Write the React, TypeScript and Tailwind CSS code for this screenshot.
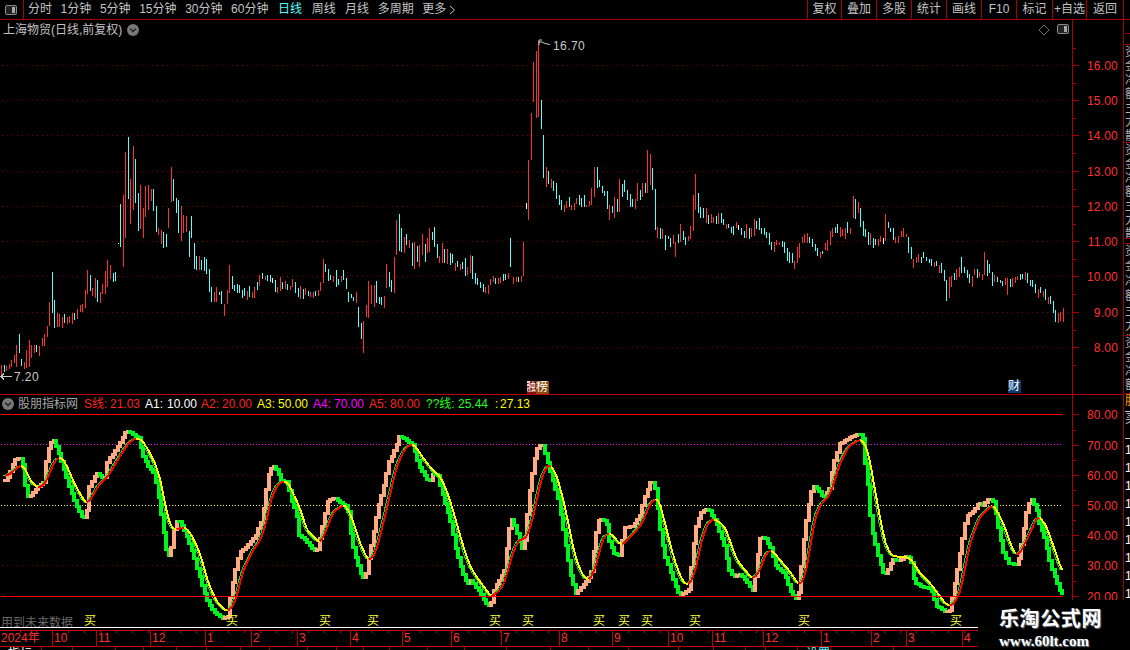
import React from "react";

const Z6 = "4 705 735 r,12 705 725 c,19 708 722 r,27 703 718 r,34 690 710 r,43 675 700 r,50 645 712 r,58 612 670 c,65 687 707 c,73 697 717 r,80 660 715 r,88 630 712 r,95 645 685 r,103 645 668 r,110 645 665 c,118 648 678 r,128 625 648 r,134 612 648 r,142 588 620 r,149 516 588 r,157 427 548 c,164 510 593 c,172 548 590 r,179 552 590 r,187 560 594 r,194 552 580 c,202 560 582 r,209 558 578 r,217 550 582 r,224 548 570 c,232 538 568 r,241 525 545 r,248 522 546 r,256 480 533 r,263 420 492 r,271 435 484 c,278 473 498 r,286 445 505 r,293 450 516 c,301 487 518 r,308 462 492 r,316 422 492 r,323 390 472 r,331 405 448 r,339 428 456 c,346 425 453 c,355 338 342 w,362 222 352 c,370 195 411 r,377 65 323 r,385 20 207 c,392 148 282 r,400 48 240 r,406 87 218 c,415 190 303 c,421 165 296 r,430 233 323 r,436 168 260 r,445 165 240 r,454 176 213 r,461 176 243 c,469 228 305 c,476 294 314 r,484 300 342 r,491 305 353 c,499 312 350 c,506 233 294 r,514 111 215 r,521 148 213 c,529 205 250 c,536 210 308 c,545 228 333 r,551 255 308 r,559 258 307 r,568 303 380 c,575 258 323 c,584 340 416 c,590 378 420 c,599 378 420 r,605 390 420 c,613 382 423 c,619 387 433 c,628 417 485 c,635 472 515 c,643 486 515 r,650 472 515 r,658 486 495 c,665 483 522 c,673 522 557 r,682 480 522 r,688 405 488 r,698 438 478 c,704 465 482 c,712 462 488 c,718 465 490 c,727 480 503 c,733 475 498 c,742 483 510 r,748 468 500 c,757 486 503 r,763 472 503 r,772 455 480 c,779 435 468 r,787 430 446 c,796 438 450 r,803 435 452 c,811 435 455 c,817 445 458 w,826 450 486 c,833 472 488 r,841 440 484 r,848 455 478 c,856 454 478 r,863 462 480 c,871 468 480 r,878 447 470 r,885 455 490 c,895 475 500 c";
const Z7 = "0 768 808 r,10 778 808 c,17 773 795 r,25 783 797 c,32 785 802 r,40 785 803 r,47 783 797 c,55 780 797 r,62 755 783 r,70 687 760 r,77 702 727 c,85 717 752 c,92 735 750 c,100 738 755 r,110 720 772 c,115 747 765 c,125 738 755 r,130 720 750 c,140 745 777 c,145 787 815 c,155 793 805 c,160 800 813 c,170 787 818 r,175 832 890 c,185 878 928 c,190 873 968 r,200 825 860 r,205 753 865 r,213 765 822 r,222 765 832 r,229 753 818 c,239 800 823 c,245 800 825 c,253 798 833 r,260 702 773 r,268 727 770 c,275 750 785 c,283 680 790 r,290 570 675 r,298 552 662 c,305 595 665 c,313 620 670 r,320 612 645 c,328 630 655 r,338 638 707 c,344 635 716 r,352 648 697 c,358 645 710 r,366 612 675 r,375 643 695 c,381 624 668 r,389 595 665 r,397 605 630 c,403 590 652 c,412 642 685 c,418 677 698 r,427 640 700 r,434 657 700 c,442 657 703 r,450 670 705 c,457 672 698 c,466 698 722 r,473 692 712 c,481 703 720 r,487 697 718 c,495 684 738 c,502 710 735 r,511 675 728 r,517 678 748 c,525 728 762 c,532 743 765 c,541 757 773 c,549 762 785 c,556 770 790 r,565 765 792 r,572 748 765 r,579 738 757 r,586 745 762 c,595 745 762 r,601 742 760 r,610 733 752 c,616 733 750 c,625 730 747 r,631 625 710 c,640 742 762 r,648 740 757 r,655 742 757 c,663 738 755 r,670 636 737 r,679 519 537 w,685 390 570 r,694 250 390 r,700 97 215 r,709 63 263 r,715 33 260 r,724 210 297 c,730 315 443 c,739 412 470 r,745 424 462 c,754 447 475 r,760 453 483 c,769 460 507 c,778 494 525 c,784 510 540 c,793 525 545 r,799 513 533 r,808 500 530 c,814 525 540 r,823 520 540 r,829 503 522 r,838 495 525 c,844 503 530 c,853 495 532 c,859 525 532 r,868 513 527 r,874 473 525 r,883 410 500 r,892 410 475 c,898 450 470 c,907 468 490 c,913 483 497 c,922 483 538 c,928 525 570 r,937 528 550 c,943 500 565 r,952 507 545 c,958 447 545 r,967 462 502 c,973 450 485 c,982 480 510 c,991 492 532 c,997 507 530 c,1006 507 537 r,1012 458 513 r,1021 480 510 c,1027 458 500 r,1036 458 490 c,1041 360 490 r,1051 372 465 r,1057 413 480 c,1066 477 600 c,1072 592 625 r,1081 595 628 c,1087 598 628 r,1096 615 660 c,1105 618 627 c,1111 625 650 c,1120 615 642 r,1126 637 680 r,1135 612 640 c,1141 582 635 r,1150 603 630 c,1156 622 645 c,1165 618 633 r,1171 588 627 r,1180 495 603 r,1187 432 540 r,1195 490 548 c";
const Z8 = "25 188 250 c,32 230 265 c,40 233 265 c,48 233 278 r,56 255 282 c,64 252 280 r,71 262 280 r,79 258 282 c,86 250 282 r,94 250 278 c,100 267 285 c,109 282 297 r,115 282 295 c,124 290 310 c,130 288 315 c,139 276 295 r,145 285 300 w,154 295 315 c,163 303 325 c,169 282 325 r,178 295 328 c,184 295 320 r,193 267 318 r,199 272 297 c,208 264 300 c,214 293 312 c,223 295 315 c,229 305 325 c,238 310 345 c,244 335 360 c,253 335 365 r,259 330 345 r,268 335 345 r,277 332 352 c,283 335 370 c,292 355 393 c,298 365 400 c,307 368 400 c,313 393 417 r,322 352 398 r,328 340 383 r,337 320 340 r,343 312 340 r,352 310 338 r,358 320 340 c,367 327 350 c,376 342 362 c,383 355 378 c,391 365 383 r,397 362 372 c,406 340 360 r,412 330 362 r,421 303 345 r,427 295 320 r,436 290 310 c,442 283 310 c,451 292 322 r,457 296 318 r,466 293 328 r,472 277 310 c,481 294 312 r,490 198 265 r,496 207 268 c,505 217 248 r,511 235 290 c,520 272 318 c,526 298 320 c,535 307 345 c,541 308 345 r,550 325 353 c,556 326 345 c,565 328 348 r,571 318 335 r,579 325 342 w,586 252 332 r,595 277 293 c,601 293 305 c,610 295 330 c,616 320 340 r,625 318 340 r,634 304 322 r,640 295 320 r,649 313 320 r,655 320 368 c,664 352 388 c,670 388 413 r,679 380 398 r,685 372 395 r,694 380 400 c,700 367 385 c,709 382 392 c,718 388 398 c,724 388 407 c,733 397 412 r,739 392 408 c,748 405 430 r,754 400 430 c,763 420 452 c,769 450 512 c,778 440 503 r,784 438 470 r,793 430 450 c,799 418 450 r,808 412 440 r,814 380 428 c,823 410 430 c,832 420 445 c,838 432 460 c,847 437 470 r,853 418 435 r,862 418 445 c,868 425 440 r,877 432 450 r,883 366 436 r,892 390 438 c,898 402 430 c,907 427 467 c,913 435 455 r,922 440 455 c,931 450 460 c,937 452 467 c,946 445 465 r,952 445 495 r,961 447 472 c,967 445 470 r,976 440 458 r,982 438 450 r,991 432 450 c,997 432 448 c,1006 427 450 r,1012 428 458 c,1021 450 467 c,1027 450 472 c,1036 462 488 c,1045 477 503 r,1051 470 490 c,1060 483 502 r,1066 477 510 c,1075 500 522 r,1081 498 522 c,1090 513 548 c,1096 540 575 c,1105 550 578 r,1111 547 572 r,1120 535 575 r";

function candlePaths() {
  const d: Record<string, string> = { r: "", c: "", w: "" };
  const add = (s: string, ox: number, oy: number) => {
    s.split(",").forEach((t) => {
      const [x, a, b, c] = t.split(" ");
      const px = Math.floor(ox + Number(x) / 3) + 0.5;
      const y1 = Math.round(oy + Number(a) / 3);
      const y2 = Math.round(oy + Number(b) / 3);
      d[c] += `M${px} ${y1}V${y2}`;
    });
  };
  add(Z6, 0, 130);
  add(Z7, 300, 30);
  add(Z8, 690, 130);
  return d;
}

type P = number[];
const F9: P[] = [[12,210],[25,195],[30,170],[42,148],[58,143],[65,160],[72,190],[75,260],[90,255],[105,235],[128,215],[132,170],[145,100],[158,90],[165,105],[175,135],[190,180],[205,230],[225,285],[247,325],[257,310],[262,235],[275,208],[287,188],[300,200],[312,200],[320,150],[335,130],[355,100],[375,62],[395,70],[415,85],[422,130],[440,165],[460,190],[470,240],[480,310],[490,380],[500,445],[508,420],[515,400],[520,345],[530,325],[545,350],[560,385],[575,425],[590,480],[605,530],[620,575],[640,605],[665,625],[680,618],[690,545],[700,490],[715,425],[740,405],[765,375],[780,335],[790,280],[800,200],[815,165],[830,180],[840,210],[860,215],[870,270],[885,300],[895,375]];
const F10: P[] = [[10,385],[40,420],[50,415],[60,370],[70,320],[80,270],[100,262],[125,280],[140,290],[145,350],[160,430],[185,505],[195,490],[205,430],[215,380],[230,295],[245,240],[265,150],[285,110],[295,78],[320,90],[335,105],[355,170],[385,215],[395,190],[410,195],[430,270],[450,340],[465,420],[485,490],[500,520],[510,510],[540,550],[560,588],[570,580],[580,535],[610,480],[620,390],[630,320],[640,345],[665,420],[670,400],[685,250],[700,150],[712,105],[725,105],[740,155],[770,260],[785,350],[810,500],[825,550],[850,520],[870,490]];
const F11: P[] = [[0,435],[15,370],[25,325],[45,330],[55,395],[70,430],[85,435],[100,352],[125,348],[145,320],[160,265],[175,222],[182,208],[195,240],[205,340],[220,430],[240,490],[265,555],[280,548],[295,535],[303,435],[315,350],[330,305],[350,295],[375,335],[400,405],[415,480],[430,500],[445,490],[465,510],[485,540],[495,480],[505,385],[520,380],[540,415],[555,470],[580,490],[600,545],[615,565],[625,540],[635,410],[650,300],[665,225],[680,235],[697,262],[715,235],[725,170],[745,100],[770,85],[805,68],[815,85],[822,155],[830,220],[840,340]];
const F12: P[] = [[70,390],[85,450],[100,497],[115,470],[125,445],[140,452],[170,435],[180,450],[190,515],[215,530],[240,535],[255,585],[280,603],[298,600],[305,555],[320,470],[330,410],[345,320],[370,300],[385,275],[395,285],[415,262],[428,275],[440,340],[455,420],[470,458],[495,463],[505,440],[520,345],[530,285],[543,266],[557,300],[565,340],[580,380],[600,470],[630,550],[640,548]];
const S9: P[] = [[15,198],[30,192],[50,175],[65,162],[80,185],[95,220],[115,231],[130,228],[145,200],[160,160],[180,137],[200,165],[220,215],[240,250],[258,283],[275,265],[295,225],[320,205],[350,155],[385,100],[410,82],[430,95],[450,130],[470,170],[485,225],[500,310],[515,355],[525,360],[555,350],[575,375],[600,430],[625,520],[650,575],[680,605],[695,597],[710,560],[730,480],[760,420],[785,385],[800,330],[815,260],[835,220],[860,213],[880,250],[900,295]];
const S10: P[] = [[20,360],[60,400],[75,370],[100,305],[135,283],[155,320],[180,400],[205,453],[225,435],[250,340],[290,170],[315,115],[340,100],[370,145],[400,183],[425,205],[450,270],[490,410],[510,470],[540,515],[575,562],[610,530],[635,440],[655,390],[680,385],[700,320],[725,200],[748,158],[770,195],[795,290],[825,440],[850,500],[870,513]];
const S11: P[] = [[20,460],[40,380],[60,368],[95,407],[130,370],[155,345],[180,280],[205,263],[225,340],[250,440],[275,510],[295,528],[315,490],[335,390],[355,335],[375,327],[405,350],[440,450],[490,510],[510,480],[530,425],[545,420],[600,485],[630,530],[650,480],[675,320],[695,280],[720,255],[750,160],[775,110],[815,85],[835,125]];
const S12: P[] = [[80,270],[105,400],[125,438],[180,443],[210,490],[245,525],[285,580],[305,590],[330,550],[360,400],[390,320],[430,283],[460,340],[490,425],[505,438],[530,390],[565,315],[590,350],[640,495]];

function merge(parts: [P[], number][]) {
  const out: number[][] = [];
  parts.forEach(([pts, ox]) =>
    pts.forEach(([x, y]) => {
      const rx = ox + x / 3;
      if (!out.length || rx > out[out.length - 1][0]) out.push([rx, 410 + y / 3]);
    })
  );
  return out;
}
function sample(pts: number[][], step: number) {
  const res: number[][] = [];
  let j = 0;
  for (let x = pts[0][0]; x <= pts[pts.length - 1][0]; x += step) {
    while (j < pts.length - 2 && pts[j + 1][0] < x) j++;
    const [x0, y0] = pts[j];
    const [x1, y1] = pts[j + 1];
    res.push([x, y0 + ((y1 - y0) * (x - x0)) / (x1 - x0)]);
  }
  return res;
}
function smooth(pts: number[][]) {
  return pts.map((p, i) => {
    const a = pts[Math.max(0, i - 1)];
    const b = pts[Math.min(pts.length - 1, i + 1)];
    return [p[0], (a[1] + 2 * p[1] + b[1]) / 4];
  });
}

const fast = sample(merge([[F9, 0], [F10, 300], [F11, 590], [F12, 850]]), 2.56);
const slow = smooth(sample(merge([[S9, 0], [S10, 300], [S11, 590], [S12, 850]]), 2.56));

function IndicatorLines() {
  const blocks = fast.map((p, i) => {
    const prev = fast[Math.max(0, i - 1)];
    const top = Math.round(Math.min(p[1], prev[1]));
    const bottom = Math.round(Math.max(p[1], prev[1]));
    const up = p[1] <= prev[1];
    return (
      <rect
        key={i}
        x={Math.round(p[0]) - 1}
        y={top - 1}
        width={4}
        height={Math.max(3, bottom - top + 3)}
        fill={up ? "#ffaa80" : "#00f420"}
      />
    );
  });
  let red = "";
  let yellow = "";
  let thin = "";
  slow.forEach((p, i) => {
    if (!i) return;
    const q = slow[i - 1];
    const seg = `M${q[0].toFixed(1)} ${q[1].toFixed(1)}L${p[0].toFixed(1)} ${p[1].toFixed(1)}`;
    if (p[1] <= q[1]) red += seg;
    else yellow += seg;
    thin += `M${(q[0] - 2).toFixed(1)} ${q[1].toFixed(1)}L${(p[0] - 2).toFixed(1)} ${p[1].toFixed(1)}`;
  });
  return (
    <g shapeRendering="crispEdges">
      {blocks}
      <path d={thin} stroke="#00e020" strokeWidth={1} fill="none" />
      <path d={yellow} stroke="#ffff00" strokeWidth={2} fill="none" />
      <path d={red} stroke="#ff0000" strokeWidth={2} fill="none" />
    </g>
  );
}

const AXIS = "#a80000";
const LABEL = "#ff3030";

function PanelIcon({ cls }: { cls: string }) {
  return (
    <svg viewBox="0 0 12 10" className={cls}>
      <rect x="0.5" y="0.5" width="11" height="9" rx="1.5" fill="#222" stroke="#8a8a8a" />
      <rect x="7" y="2" width="3" height="6" fill="#a8a8a8" />
    </svg>
  );
}
function CircleChevron() {
  return (
    <svg viewBox="0 0 12 12" className="w-[12px] h-[12px] shrink-0">
      <circle cx="6" cy="6" r="6" fill="#777" />
      <path d="M3.2 4.8L6 7.6L8.8 4.8" stroke="#222" strokeWidth="1.4" fill="none" />
    </svg>
  );
}

function Toolbar() {
  const left = ["分时", "1分钟", "5分钟", "15分钟", "30分钟", "60分钟"];
  const right = ["复权", "叠加", "多股", "统计", "画线", "F10", "标记", "+自选", "返回"];
  const widths = ["w-[34px]", "w-[35px]", "w-[35px]", "w-[35px]", "w-[35px]", "w-[35px]", "w-[36px]", "w-[34px]", "w-[37px]"];
  return (
    <div className="h-[20px] shrink-0 flex items-stretch border-b border-[#a80000] text-[12px] leading-[19px] text-[#c4c4c4]">
      <div className="w-[24px] shrink-0 border-r border-[#a80000] flex items-center justify-center pr-[1px]">
        <PanelIcon cls="w-[12px] h-[10px]" />
      </div>
      <div className="flex items-center gap-[8.6px] pl-[4px]">
        {left.map((t) => (
          <span key={t}>{t}</span>
        ))}
        <span className="text-[#55ffff] ml-[1px]">日线</span>
        <span className="ml-[1px]">周线</span>
        <span className="ml-[0.8px]">月线</span>
        <span>多周期</span>
        <span className="flex items-center gap-[3px]">
          更多
          <svg viewBox="0 0 7 10" className="w-[7px] h-[10px]">
            <path d="M1 1L5.5 5L1 9" stroke="#c4c4c4" fill="none" />
          </svg>
        </span>
      </div>
      <div className="ml-auto flex mr-[6px]">
        {right.map((t, i) => (
          <div key={t} className={`${widths[i]} border-l border-[#a80000] flex items-center justify-center`}>
            {t}
          </div>
        ))}
        <div className="w-0 border-r border-[#a80000]" />
      </div>
    </div>
  );
}

function Grid({ ys, x2 }: { ys: number[]; x2: number }) {
  return (
    <>
      {ys.map((y) => (
        <line key={y} x1={2} x2={x2} y1={y + 0.5} y2={y + 0.5} stroke="#7c0000" strokeDasharray="1 4" shapeRendering="crispEdges" />
      ))}
    </>
  );
}

function MainPane() {
  const c = candlePaths();
  const prices: [string, number][] = [["16.00",65],["15.00",100],["14.00",135],["13.00",171],["12.00",206],["11.00",241],["10.00",276],["9.00",312],["8.00",347]];
  return (
    <div className="relative h-[375px] shrink-0 border-b border-[#c00000]">
      <svg viewBox="0 20 1123 374" className="block w-[1123px] h-[374px]">
        <Grid ys={prices.map((p) => p[1])} x2={1068} />
        <path d={c.r} stroke="#ff3030" fill="none" shapeRendering="crispEdges" />
        <path d={c.c} stroke="#54ffff" fill="none" shapeRendering="crispEdges" />
        <path d={c.w} stroke="#ffffff" fill="none" shapeRendering="crispEdges" />
        <line x1={1072.5} x2={1072.5} y1={20} y2={394} stroke={AXIS} shapeRendering="crispEdges" />
        {prices.map(([t, y]) => (
          <g key={t}>
            <line x1={1073} x2={1079} y1={y + 0.5} y2={y + 0.5} stroke={AXIS} shapeRendering="crispEdges" />
            <line x1={1073} x2={1076} y1={y + 18} y2={y + 18} stroke={AXIS} shapeRendering="crispEdges" />
            <text x={1118} y={y + 5} fill={LABEL} fontSize={12} textAnchor="end" letterSpacing={0.2}>{t}</text>
          </g>
        ))}
        <line x1={1073} x2={1076} y1={48} y2={48} stroke={AXIS} shapeRendering="crispEdges" />
        <path d="M1 376.5H12M4 373.5L1 376.5L4 379.5" stroke="#c8c8c8" fill="none" shapeRendering="crispEdges" />
        <text x={14} y={381} fill="#c8c8c8" fontSize={12} letterSpacing={0.4}>7.20</text>
        <path d="M539 45V40H542M539 42H542L545 43.5L550 44.5" stroke="#c8c8c8" fill="none" />
        <text x={553} y={50} fill="#c8c8c8" fontSize={12} letterSpacing={0.4}>16.70</text>
        <path d="M1039 30L1044 25L1049 30L1044 35Z" stroke="#6a6a6a" fill="none" />
      </svg>
      <div className="absolute left-[3px] top-[3px] flex items-center gap-[5px] text-[12px] leading-[14px] text-[#c0c0c0]">
        <span>上海物贸(日线,前复权)</span>
        <CircleChevron />
      </div>
      <div className="absolute left-[1057px] top-[4px]">
        <PanelIcon cls="block w-[12px] h-[10px]" />
      </div>
      <div className="absolute left-[527px] top-[361px] flex h-[13px] text-[12px] leading-[13px] text-white">
        <span className="w-[9px] overflow-hidden bg-[#801010] flex justify-end">融</span>
        <span className="w-[13px] overflow-hidden bg-[#8a4a10]">榜</span>
      </div>
      <div className="absolute left-[1008px] top-[360px] w-[13px] h-[13px] bg-[#0c3a70] text-white text-[12px] leading-[13px]">财</div>
    </div>
  );
}

function IndicatorPane() {
  const levels: [string, number][] = [["80.00",414],["70.00",445],["60.00",475],["50.00",505],["40.00",535],["30.00",565],["20.00",596]];
  const buy = [90, 232, 325, 373, 495, 528, 599, 624, 647, 695, 804, 956];
  const heads: [string, string, number][] = [
    ["S线:", "#ff2020", 84], ["21.03", "#ff2020", 110],
    ["A1:", "#ffffff", 145], ["10.00", "#ffffff", 167],
    ["A2:", "#ff2020", 201], ["20.00", "#ff2020", 222],
    ["A3:", "#ffff00", 257], ["50.00", "#ffff00", 278],
    ["A4:", "#ff00ff", 313], ["70.00", "#ff00ff", 334],
    ["A5:", "#ff2020", 369], ["80.00", "#ff2020", 390],
    ["??线:", "#20ff20", 426], ["25.44", "#20ff20", 458],
    [":", "#ffff00", 495], ["27.13", "#ffff00", 500],
  ];
  return (
    <div className="relative h-[235px] shrink-0">
      <svg viewBox="0 395 1123 235" className="block w-[1123px] h-[235px]">
        <Grid ys={[475, 535, 565]} x2={1068} />
        <line x1={1} x2={1063} y1={414.5} y2={414.5} stroke="#ff0000" shapeRendering="crispEdges" />
        <line x1={1} x2={1063} y1={444.5} y2={444.5} stroke="#ff00ff" strokeDasharray="1 2" shapeRendering="crispEdges" />
        <line x1={1} x2={1063} y1={505.5} y2={505.5} stroke="#ffff40" strokeDasharray="1 2" shapeRendering="crispEdges" />
        <IndicatorLines />
        <line x1={1} x2={1063} y1={596.5} y2={596.5} stroke="#ff0000" shapeRendering="crispEdges" />
        <line x1={1072.5} x2={1072.5} y1={395} y2={600} stroke={AXIS} shapeRendering="crispEdges" />
        {levels.map(([t, y]) => (
          <g key={t}>
            <line x1={1073} x2={1079} y1={y + 0.5} y2={y + 0.5} stroke={AXIS} shapeRendering="crispEdges" />
            {y > 414 && <line x1={1073} x2={1076} y1={y - 15} y2={y - 15} stroke={AXIS} shapeRendering="crispEdges" />}
            <text x={1118} y={y + 5} fill={LABEL} fontSize={12} textAnchor="end" letterSpacing={0.2}>{t}</text>
          </g>
        ))}
        {buy.map((x, i) => (
          <text key={i} x={x} y={625} fill="#ffff40" fontSize={12} textAnchor="middle">买</text>
        ))}
        <text x={1} y={627} fill="#6a6a6a" fontSize={12}>用到未来数据</text>
        <line x1={0} x2={978} y1={627} y2={627} stroke="#ffffff" shapeRendering="crispEdges" />
        {heads.map(([t, col, x], i) => (
          <text key={i} x={x} y={408} fill={col} fontSize={12}>{t}</text>
        ))}
      </svg>
      <div className="absolute left-[2px] top-[2px] flex items-center gap-[4px] text-[12px] leading-[14px] text-[#a8a8a8]">
        <CircleChevron />
        <span>股朋指标网</span>
      </div>
    </div>
  );
}

function XAxis() {
  const segs: [string, number][] = [["2024年",52],["10",44],["11",54],["12",55],["1",46],["2",46],["3",53],["4",52],["5",49],["6",50],["7",58],["8",53],["9",56],["10",44],["11",51],["12",58],["1",50],["2",35],["3",56],["4",15]];
  const tabs: [string, number, string][] = [["指标",42,"text-white"],["+",31,"text-white"],["",43,""],["",28,""],["",33,""],["",30,""],["",34,""],["",29,""],["",38,""],["",29,""],["",27,""],["",26,""],["",38,""],["",37,""],["",42,""],["",44,""],["",38,""],["",40,""],["",50,""],["",35,""],["",32,""],["",20,"text-white"],["+",32,"text-white"],["设置",33,"text-[#55ffff]"],["",63,""]];
  return (
    <div className="w-[978px]">
      <div className="relative h-[17px] flex border-y border-[#c00000] text-[12px] leading-[15px] text-[#ff3030]">
        {segs.map(([t, w], i) => (
          <div key={i} style={{ width: w }} className={`shrink-0 pl-[1px] ${i ? "border-l border-[#c00000]" : ""}`}>
            {t}
          </div>
        ))}
        <svg viewBox="0 0 978 3" className="absolute left-0 top-0 w-[978px] h-[3px]">
          {Array.from({ length: 61 }, (_, i) => (
            <line key={i} x1={20.5 + i * 16} x2={20.5 + i * 16} y1={0} y2={2} stroke="#c00000" shapeRendering="crispEdges" />
          ))}
        </svg>
      </div>
      <div className="h-[3px] flex overflow-hidden text-[12px] leading-[14px]">
        {tabs.map(([t, w, col], i) => (
          <div key={i} style={{ width: w }} className={`shrink-0 pl-[8px] border-r border-[#a80000] ${col}`}>
            {t}
          </div>
        ))}
      </div>
    </div>
  );
}

function RightStrip() {
  const top = "资金净额主力散户";
  const rows = Array.from({ length: 9 }, (_, i) => i);
  return (
    <div className="w-[7px] shrink-0 border-l border-[#a80000] flex flex-col overflow-hidden text-[12px] leading-[14px] text-[#b4b4b4] pl-[1px]">
      <div className="h-[14px] shrink-0 border-b border-[#a80000] w-[12px]" />
      <div className="h-[11px] shrink-0 border-b border-[#a80000] w-[12px]" />
      <div className="h-[98px] shrink-0 border-b border-[#a80000] w-[12px] overflow-hidden">
        {(top + top).split("").map((c, i) => <div key={i}>{c}</div>)}
      </div>
      <div className="h-[96px] shrink-0 border-b border-[#a80000] w-[12px] overflow-hidden">
        {top.split("").map((c, i) => <div key={i}>{c}</div>)}
      </div>
      <div className="h-[5px] shrink-0 border-b border-[#a80000] w-[12px]" />
      <div className="h-[92px] shrink-0 border-b border-[#a80000] w-[12px] overflow-hidden">
        {(top + top).split("").map((c, i) => <div key={i} className="leading-[15px]">{c}</div>)}
      </div>
      <div className="h-[58px] shrink-0 border-b border-[#a80000] w-[12px] overflow-hidden">
        {top.split("").map((c, i) => <div key={i}>{c}</div>)}
      </div>
      <div className="h-[17px] shrink-0 text-[#ffa000]">股</div>
      <div className="h-[28px] shrink-0 border-y border-[#c8c8c8] text-[#c8c8c8] w-[12px]">买</div>
      <div className="pt-[2px]">
        {rows.map((i) => <div key={i} className="h-[18px] leading-[18px] text-white">1</div>)}
      </div>
    </div>
  );
}

export default function App() {
  return (
    <div className="relative w-[1130px] h-[650px] overflow-hidden bg-black flex flex-col font-['Liberation_Sans','Noto_Sans_CJK_SC',sans-serif]">
      <Toolbar />
      <div className="flex flex-1 min-h-0">
        <div className="w-[1123px] shrink-0 flex flex-col">
          <MainPane />
          <IndicatorPane />
          <XAxis />
        </div>
        <RightStrip />
      </div>
      <div className="absolute left-[978px] top-[600px] w-[152px] h-[50px] bg-black flex flex-col items-start pl-[21px] pt-[8px] text-white [text-shadow:1px_1px_1px_#777]">
        <div className="text-[20px] leading-[22px] font-bold tracking-[0.6px]">乐淘公式网</div>
        <div className="font-['Liberation_Serif',serif] text-[15px] leading-[16px] font-bold mt-[3px]">www.60lt.com</div>
      </div>
    </div>
  );
}
